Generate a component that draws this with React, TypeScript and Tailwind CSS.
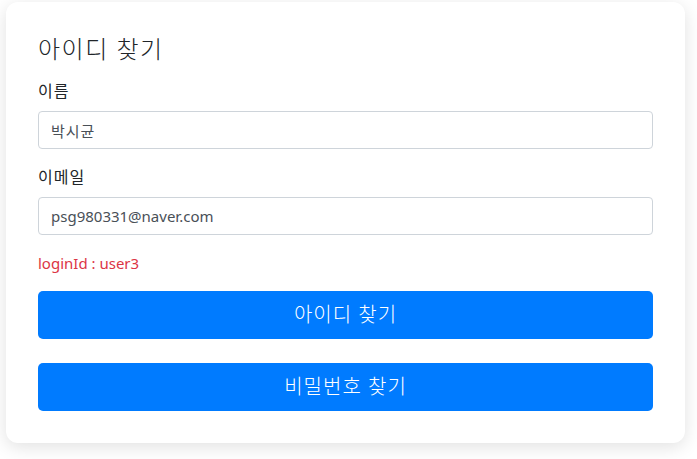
export default function App() {
  return (
    <div
      className="min-h-screen bg-white pt-[2px] pl-[6px] pr-[12px]"
      style={{ fontFamily: '"Noto Sans", "Noto Sans CJK KR", sans-serif' }}
    >
      <div className="w-[679px] rounded-xl bg-white px-8 pt-8 pb-8 shadow-[0_4px_18px_rgba(0,0,0,0.12)]">
        <h2 className="mb-4 text-[24px] leading-[29px] font-light tracking-[1.5px] text-[#212529]">아이디 찾기</h2>
        <div className="mb-4">
          <label className="mb-2 block text-[16px] leading-6 tracking-[1px] text-[#212529]">이름</label>
          <input
            readOnly
            value="박시균"
            className="block h-[38px] w-full rounded border border-[#ced4da] px-3 text-[15px] tracking-[1px] text-[#495057] outline-none"
          />
        </div>
        <div className="mb-4">
          <label className="mb-2 block text-[16px] leading-6 tracking-[1px] text-[#212529]">이메일</label>
          <input
            readOnly
            value="psg980331@naver.com"
            className="block h-[38px] w-full rounded border border-[#ced4da] px-3 text-[15px] text-[#495057] outline-none"
          />
        </div>
        <p className="mb-4 text-[15px] leading-6 text-[#dc3545]">loginId : user3</p>
        <button className="block h-[48px] w-full rounded-[5px] bg-[#007bff] text-[20px] font-light tracking-[1px] text-white">
          아이디 찾기
        </button>
        <button className="mt-6 block h-[48px] w-full rounded-[5px] bg-[#007bff] text-[20px] font-light tracking-[1px] text-white">
          비밀번호 찾기
        </button>
      </div>
    </div>
  );
}
